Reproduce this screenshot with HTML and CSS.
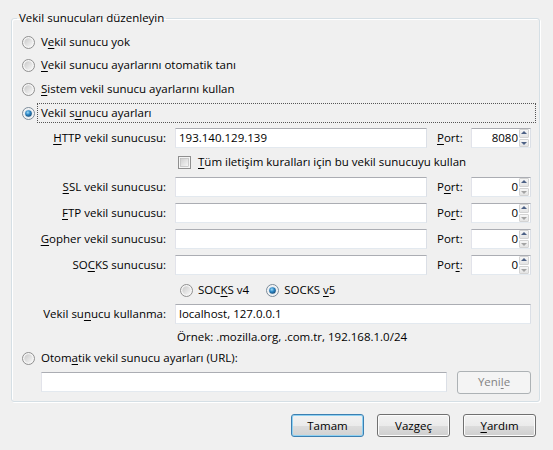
FILE: index.html
```html
<!DOCTYPE html>
<html lang="tr">
<head>
<meta charset="utf-8">
<title>Bağlantı ayarları</title>
<link rel="stylesheet" href="styles.css">
</head>
<body>
<svg class="defs" width="0" height="0" aria-hidden="true">
  <defs>
    <linearGradient id="rfill" x1="0" y1="0" x2="1" y2="1">
      <stop offset="0" stop-color="#c9c9c9"/>
      <stop offset="1" stop-color="#f7f7f7"/>
    </linearGradient>
    <radialGradient id="rdot" cx="0.4" cy="0.35" r="0.75">
      <stop offset="0" stop-color="#9edcf8"/>
      <stop offset="0.45" stop-color="#2b86c6"/>
      <stop offset="1" stop-color="#123f66"/>
    </radialGradient>
    <linearGradient id="cfill" x1="0" y1="0" x2="1" y2="1">
      <stop offset="0" stop-color="#cfcfcf"/>
      <stop offset="1" stop-color="#f7f7f7"/>
    </linearGradient>
  </defs>
</svg>

<div class="dialog">
  <fieldset class="group">
    <legend class="group-title">Vekil sunucuları düzenleyin</legend>

    <div class="radio-row">
      <svg class="radio" viewBox="0 0 13 13" width="13" height="13"><circle cx="6.5" cy="6.5" r="6" fill="#f5f5f5" stroke="#8f8f8f"/><circle cx="6.5" cy="6.5" r="4.2" fill="url(#rfill)"/></svg>
      <span class="label">V<u>e</u>kil sunucu yok</span>
    </div>
    <div class="radio-row">
      <svg class="radio" viewBox="0 0 13 13" width="13" height="13"><circle cx="6.5" cy="6.5" r="6" fill="#f5f5f5" stroke="#8f8f8f"/><circle cx="6.5" cy="6.5" r="4.2" fill="url(#rfill)"/></svg>
      <span class="label"><u>V</u>ekil sunucu ayarlarını otomatik tanı</span>
    </div>
    <div class="radio-row">
      <svg class="radio" viewBox="0 0 13 13" width="13" height="13"><circle cx="6.5" cy="6.5" r="6" fill="#f5f5f5" stroke="#8f8f8f"/><circle cx="6.5" cy="6.5" r="4.2" fill="url(#rfill)"/></svg>
      <span class="label"><u>S</u>istem vekil sunucu ayarlarını kullan</span>
    </div>
    <div class="radio-row">
      <svg class="radio" viewBox="0 0 13 13" width="13" height="13"><circle cx="6.5" cy="6.5" r="6" fill="#f5f5f5" stroke="#7a8a99"/><circle cx="6.5" cy="6.5" r="4.2" fill="#dfe9f1"/><circle cx="6.5" cy="6.5" r="3.3" fill="url(#rdot)"/></svg>
      <span class="label focus">Vekil s<u>u</u>nucu ayarları</span>
    </div>

    <div class="proxy">
      <span class="plabel"><u>H</u>TTP vekil sunucusu:</span>
      <div class="textbox host">193.140.129.139</div>
      <span class="port"><u>P</u>ort:</span>
      <div class="spin"><span class="spin-val">8080</span><span class="spin-btns"><span class="sb up"></span><span class="sb down"></span></span></div>

      <div class="check-row">
        <svg class="check" viewBox="0 0 13 13" width="13" height="13"><rect x="0.5" y="0.5" width="12" height="12" fill="#f4f4f4" stroke="#8f8f8f"/><rect x="2.5" y="2.5" width="8" height="8" fill="url(#cfill)" stroke="#b5b5b5" stroke-width="0.6"/></svg>
        <span><u>T</u>üm iletişim kuralları için bu vekil sunucuyu kullan</span>
      </div>

      <span class="plabel"><u>S</u>SL vekil sunucusu:</span>
      <div class="textbox host"></div>
      <span class="port">P<u>o</u>rt:</span>
      <div class="spin"><span class="spin-val">0</span><span class="spin-btns"><span class="sb up"></span><span class="sb down off"></span></span></div>

      <span class="plabel"><u>F</u>TP vekil sunucusu:</span>
      <div class="textbox host"></div>
      <span class="port">Po<u>r</u>t:</span>
      <div class="spin"><span class="spin-val">0</span><span class="spin-btns"><span class="sb up"></span><span class="sb down off"></span></span></div>

      <span class="plabel"><u>G</u>opher vekil sunucusu:</span>
      <div class="textbox host"></div>
      <span class="port">Port:</span>
      <div class="spin"><span class="spin-val">0</span><span class="spin-btns"><span class="sb up"></span><span class="sb down off"></span></span></div>

      <span class="plabel">SO<u>C</u>KS sunucusu:</span>
      <div class="textbox host"></div>
      <span class="port">Por<u>t</u>:</span>
      <div class="spin"><span class="spin-val">0</span><span class="spin-btns"><span class="sb up"></span><span class="sb down off"></span></span></div>

      <div class="socks-row">
        <span class="socks-opt">
          <svg class="radio" viewBox="0 0 13 13" width="13" height="13"><circle cx="6.5" cy="6.5" r="6" fill="#f5f5f5" stroke="#8f8f8f"/><circle cx="6.5" cy="6.5" r="4.2" fill="url(#rfill)"/></svg>
          <span>SOC<u>K</u>S v4</span>
        </span>
        <span class="socks-opt">
          <svg class="radio" viewBox="0 0 13 13" width="13" height="13"><circle cx="6.5" cy="6.5" r="6" fill="#f5f5f5" stroke="#7a8a99"/><circle cx="6.5" cy="6.5" r="4.2" fill="#dfe9f1"/><circle cx="6.5" cy="6.5" r="3.3" fill="url(#rdot)"/></svg>
          <span>SOCKS <u>v</u>5</span>
        </span>
      </div>

      <span class="plabel">Vekil su<u>n</u>ucu kullanma:</span>
      <div class="textbox wide">localhost, 127.0.0.1</div>

      <span class="example">Örnek: .mozilla.org, .com.tr, 192.168.1.0/24</span>
    </div>

    <div class="radio-row auto">
      <svg class="radio" viewBox="0 0 13 13" width="13" height="13"><circle cx="6.5" cy="6.5" r="6" fill="#f5f5f5" stroke="#8f8f8f"/><circle cx="6.5" cy="6.5" r="4.2" fill="url(#rfill)"/></svg>
      <span class="label">Otom<u>a</u>tik vekil sunucu ayarları (URL):</span>
    </div>

    <div class="url-row">
      <div class="textbox url"></div>
      <button class="btn disabled" type="button">Yeni<u>l</u>e</button>
    </div>
  </fieldset>

  <div class="buttons">
    <button class="btn default" type="button">Tamam</button>
    <button class="btn" type="button">Vazgeç</button>
    <button class="btn" type="button"><u>Y</u>ardım</button>
  </div>
</div>
</body>
</html>
```

FILE: styles.css
```css
* {
  box-sizing: border-box;
}

html, body {
  margin: 0;
  padding: 0;
  background: #f0f0f0;
}

body {
  width: 553px;
  height: 450px;
  overflow: hidden;
  font-family: "Open Sans", "Noto Sans", "Liberation Sans", sans-serif;
  font-size: 11.5px;
  line-height: 16px;
  color: #000;
}

.defs {
  position: absolute;
  width: 0;
  height: 0;
}

u {
  text-decoration: underline;
  text-decoration-thickness: 1px;
  text-underline-offset: 2px;
}

.dialog {
  padding: 10px 13px 0 11px;
  display: flex;
  flex-direction: column;
}

.group {
  margin: 0;
  padding: 6px 0 7px 0;
  border: 1px solid #d5dfe5;
  border-radius: 3px;
  box-shadow: inset 1px 1px 0 #ffffff, 1px 1px 0 #ffffff;
  display: flex;
  flex-direction: column;
}

.group-title {
  margin-left: 5px;
  padding: 0 2px;
  line-height: 16px;
}

.radio-row {
  display: flex;
  align-items: center;
  height: 20px;
  padding-left: 10px;
}

.radio-row + .radio-row {
  margin-top: 4px;
}

.radio-row:nth-of-type(2) {
  margin-top: 3px;
}

.radio {
  flex: none;
  display: block;
}

.radio-row .label {
  margin-left: 6px;
  white-space: nowrap;
}

.radio-row .label.focus {
  flex: 1;
  margin-left: 2px;
  margin-right: 3px;
  height: 20px;
  padding: 1px 3px;
  border: 1px dotted #555;
}

.proxy {
  margin-top: 5px;
  display: grid;
  grid-template-columns: 163px 262px 34px 60px;
  grid-template-rows: 24px 25px 26px 26px 26px 25px 24px 23px 20px;
  align-items: start;
}

.plabel {
  height: 20px;
  line-height: 20px;
  text-align: right;
  padding-right: 9px;
  white-space: nowrap;
}

.port {
  height: 20px;
  line-height: 20px;
  white-space: nowrap;
}

.textbox {
  height: 20px;
  background: #fff;
  border: 1px solid #abadb3;
  border-color: #abadb3 #dbdfe6 #e3e9ef #e2e3ea;
  padding: 0 3px;
  line-height: 18px;
  white-space: nowrap;
}

.textbox.host {
  width: 252px;
}

.textbox.wide {
  grid-column: 2 / 5;
}

.spin {
  height: 20px;
  background: #fff;
  border: 1px solid #abadb3;
  border-color: #abadb3 #dbdfe6 #e3e9ef #e2e3ea;
  display: flex;
  align-items: stretch;
}

.spin-val {
  flex: 1;
  text-align: right;
  line-height: 18px;
  padding-right: 1px;
}

.spin-btns {
  width: 11px;
  display: flex;
  flex-direction: column;
  gap: 1px;
  padding: 0 1px 0 0;
}

.sb {
  flex: 1;
  position: relative;
  background: linear-gradient(#f6f6f6, #e4e4e4);
  border: 1px solid #d3d3d3;
  border-radius: 1px;
}

.sb::after {
  content: "";
  position: absolute;
  left: 50%;
  top: 50%;
  margin-left: -3px;
  border-left: 3px solid transparent;
  border-right: 3px solid transparent;
}

.sb.up::after {
  margin-top: -2px;
  border-bottom: 3px solid #4d6185;
}

.sb.down::after {
  margin-top: -1px;
  border-top: 3px solid #4d6185;
}

.sb.down.off::after {
  border-top-color: #a3a3a3;
}

.check-row {
  grid-column: 2 / 5;
  height: 20px;
  display: flex;
  align-items: center;
  padding-left: 3px;
  gap: 7px;
  white-space: nowrap;
}

.check {
  display: block;
  flex: none;
}

.socks-row {
  grid-column: 2 / 5;
  height: 20px;
  display: flex;
  align-items: center;
  padding-left: 5px;
  gap: 17px;
}

.socks-opt {
  display: flex;
  align-items: center;
  gap: 5px;
}

.example {
  grid-column: 2 / 5;
  height: 20px;
  line-height: 20px;
  padding-left: 2px;
}

.radio-row.auto {
  margin-top: 1px;
}

.url-row {
  margin-top: 2px;
  padding-left: 29px;
  padding-right: 8px;
  height: 24px;
  display: flex;
  align-items: center;
  gap: 10px;
}

.textbox.url {
  width: 406px;
}

.btn {
  font: inherit;
  color: #000;
  width: 73px;
  height: 23px;
  padding: 0;
  border: 1px solid #707070;
  border-radius: 3px;
  background: linear-gradient(#f2f2f2 0%, #ebebeb 50%, #dddddd 50%, #cfcfcf 100%);
  box-shadow: inset 0 0 0 1px #fcfcfc;
}

.btn.default {
  border-color: #3c7fb1;
  box-shadow: inset 0 0 0 1px #8fd1f2;
  background: linear-gradient(#f2f2f2 0%, #ebebeb 50%, #dddddd 50%, #d2d2d2 100%);
}

.btn.disabled {
  width: 74px;
  height: 23px;
  color: #838383;
  border-color: #adb2b5;
  background: #f4f4f4;
  box-shadow: none;
}

.buttons {
  margin-top: 12px;
  padding-right: 4px;
  display: flex;
  justify-content: flex-end;
  gap: 13px;
}
```
